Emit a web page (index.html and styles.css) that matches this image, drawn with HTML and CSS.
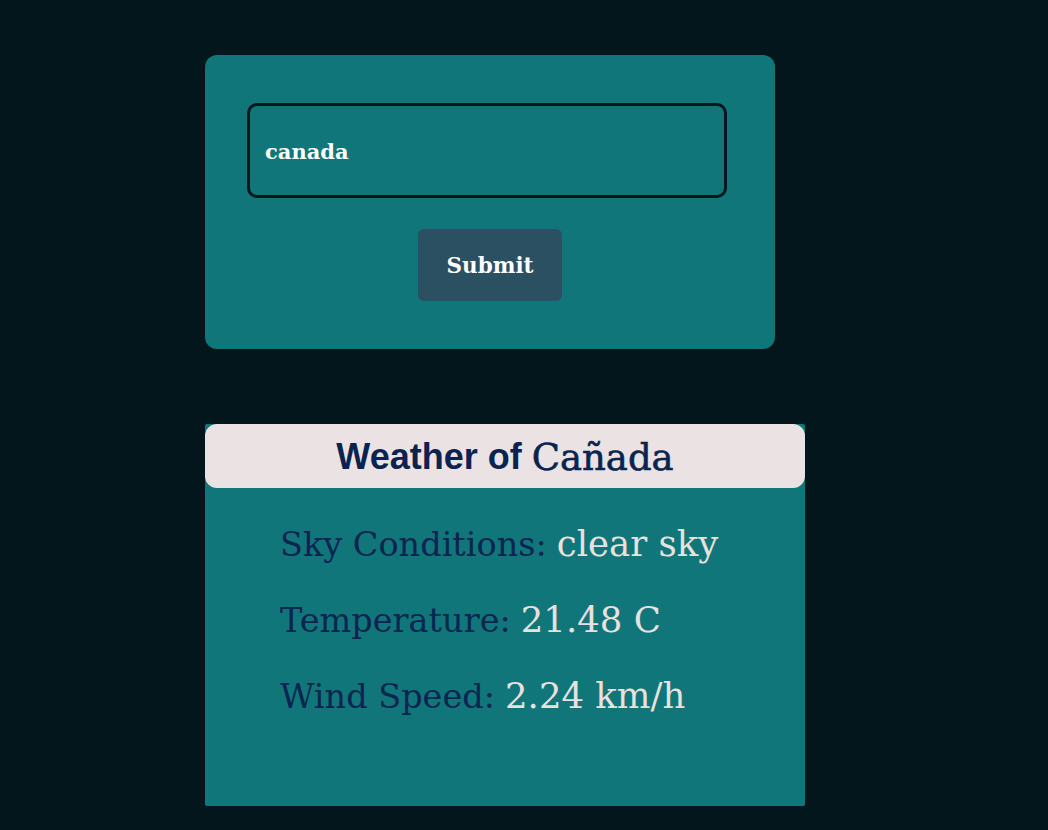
FILE: index.html
```html
<!DOCTYPE html>
<html>
<head>
<meta charset="utf-8">
<link rel="stylesheet" href="styles.css">
</head>
<body>
<main class="page">
  <form class="search-card">
    <div class="search-field">canada</div>
    <button type="button" class="submit-btn">Submit</button>
  </form>
  <section class="weather-card">
    <h2 class="weather-title"><span class="title-sans">Weather of</span> <span class="title-serif">Cañada</span></h2>
    <div class="weather-rows">
      <p class="row"><span class="label">Sky Conditions:</span> <span class="value">clear sky</span></p>
      <p class="row"><span class="label">Temperature:</span> <span class="value">21.48 C</span></p>
      <p class="row"><span class="label">Wind Speed:</span> <span class="value">2.24 km/h</span></p>
    </div>
  </section>
</main>
</body>
</html>
```
FILE: styles.css
```css
html, body {
  margin: 0;
  padding: 0;
  background: #03161c;
}
body {
  font-family: "DejaVu Serif", "Liberation Serif", serif;
  width: 1048px;
  height: 830px;
  overflow: hidden;
}
.page {
  display: flex;
  flex-direction: column;
  align-items: flex-start;
  padding: 55px 0 0 205px;
  gap: 75px;
}
.search-card {
  box-sizing: border-box;
  width: 570px;
  height: 294px;
  margin: 0;
  background: #10767a;
  border-radius: 12px;
  padding: 48px 42px;
  display: flex;
  flex-direction: column;
  align-items: center;
  gap: 31px;
}
.search-field {
  align-self: flex-start;
  box-sizing: border-box;
  width: 480px;
  height: 95px;
  border: 3px solid #05171b;
  border-radius: 10px;
  display: flex;
  align-items: center;
  padding: 2px 15px 0;
  color: #ffffff;
  font-weight: bold;
  font-size: 21px;
}
.submit-btn {
  box-sizing: border-box;
  width: 144px;
  height: 72px;
  border: none;
  border-radius: 6px;
  background: #2b5062;
  color: #ffffff;
  font-family: "DejaVu Serif", "Liberation Serif", serif;
  font-weight: bold;
  font-size: 21.5px;
  padding: 0;
}
.weather-card {
  box-sizing: border-box;
  width: 600px;
  height: 382px;
  background: #10767a;
  border-radius: 2px;
}
.weather-title {
  margin: 0;
  height: 64px;
  background: #ebe3e3;
  border-radius: 12px;
  display: flex;
  align-items: center;
  justify-content: center;
  gap: 10px;
  color: #0b2350;
  font-size: 36px;
  line-height: 1;
  padding-top: 2px;
  box-sizing: border-box;
}
.title-sans {
  font-family: "Liberation Sans", Arial, sans-serif;
  font-weight: bold;
}
.title-serif {
  font-family: "DejaVu Serif", serif;
  font-weight: normal;
  font-size: 37px;
  -webkit-text-stroke: 0.6px #0b2350;
}
.weather-rows {
  padding: 35px 0 0 75px;
  display: flex;
  flex-direction: column;
}
.row {
  margin: 0;
  height: 76px;
  display: flex;
  align-items: baseline;
  gap: 10px;
  white-space: nowrap;
}
.label {
  color: #0c2450;
  font-size: 33.5px;
}
.value {
  color: #e8e1dd;
  font-size: 35.5px;
}
```
